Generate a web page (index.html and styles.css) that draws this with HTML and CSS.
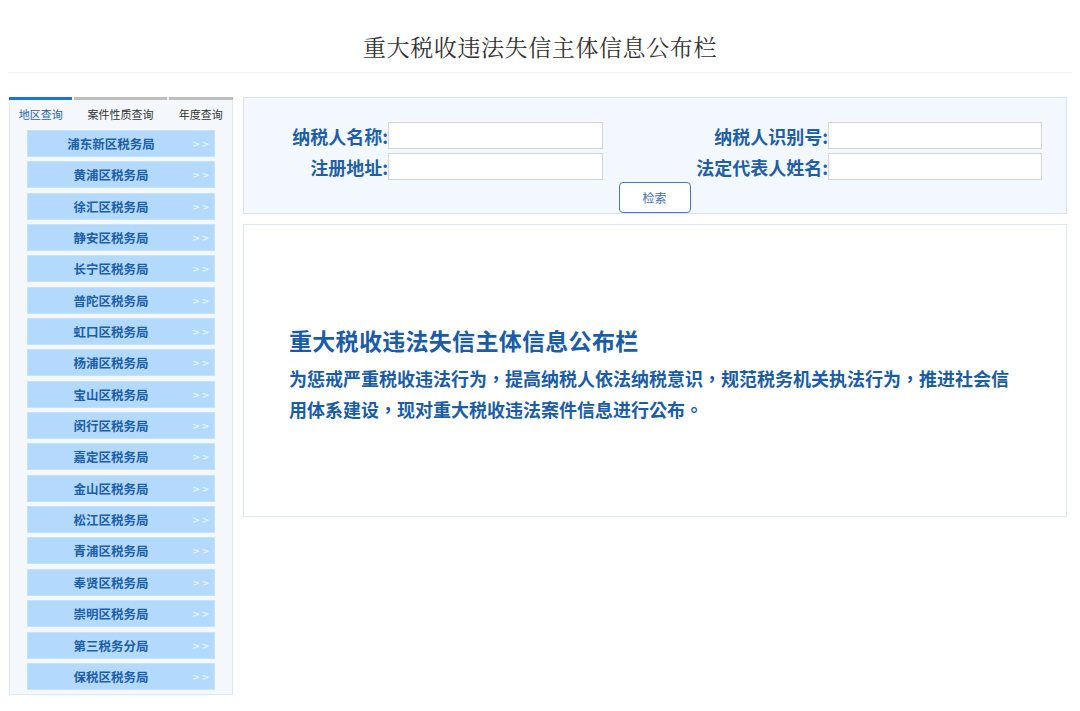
FILE: index.html
```html
<!DOCTYPE html>
<html lang="zh-CN">
<head>
<meta charset="utf-8">
<title>重大税收违法失信主体信息公布栏</title>
<link rel="stylesheet" href="styles.css">
</head>
<body>
<header class="header">
  <h1 class="page-title">重大税收违法失信主体信息公布栏</h1>
</header>
<div class="main">
  <aside class="sidebar">
    <div class="tabs">
      <div class="tab tab-active">地区查询</div>
      <div class="tab tab-mid">案件性质查询</div>
      <div class="tab tab-last">年度查询</div>
    </div>
    <ul class="list">
      <li class="item"><span class="name">浦东新区税务局</span><span class="arrow">&gt;&gt;</span></li>
      <li class="item"><span class="name">黄浦区税务局</span><span class="arrow">&gt;&gt;</span></li>
      <li class="item"><span class="name">徐汇区税务局</span><span class="arrow">&gt;&gt;</span></li>
      <li class="item"><span class="name">静安区税务局</span><span class="arrow">&gt;&gt;</span></li>
      <li class="item"><span class="name">长宁区税务局</span><span class="arrow">&gt;&gt;</span></li>
      <li class="item"><span class="name">普陀区税务局</span><span class="arrow">&gt;&gt;</span></li>
      <li class="item"><span class="name">虹口区税务局</span><span class="arrow">&gt;&gt;</span></li>
      <li class="item"><span class="name">杨浦区税务局</span><span class="arrow">&gt;&gt;</span></li>
      <li class="item"><span class="name">宝山区税务局</span><span class="arrow">&gt;&gt;</span></li>
      <li class="item"><span class="name">闵行区税务局</span><span class="arrow">&gt;&gt;</span></li>
      <li class="item"><span class="name">嘉定区税务局</span><span class="arrow">&gt;&gt;</span></li>
      <li class="item"><span class="name">金山区税务局</span><span class="arrow">&gt;&gt;</span></li>
      <li class="item"><span class="name">松江区税务局</span><span class="arrow">&gt;&gt;</span></li>
      <li class="item"><span class="name">青浦区税务局</span><span class="arrow">&gt;&gt;</span></li>
      <li class="item"><span class="name">奉贤区税务局</span><span class="arrow">&gt;&gt;</span></li>
      <li class="item"><span class="name">崇明区税务局</span><span class="arrow">&gt;&gt;</span></li>
      <li class="item"><span class="name">第三税务分局</span><span class="arrow">&gt;&gt;</span></li>
      <li class="item"><span class="name">保税区税务局</span><span class="arrow">&gt;&gt;</span></li>
    </ul>
  </aside>
  <section class="content">
    <form class="search">
      <div class="grid">
        <label class="label">纳税人名称:</label>
        <input class="field" type="text">
        <label class="label">纳税人识别号:</label>
        <input class="field" type="text">
        <label class="label">注册地址:</label>
        <input class="field" type="text">
        <label class="label">法定代表人姓名:</label>
        <input class="field" type="text">
      </div>
      <div class="actions">
        <button class="btn" type="button">检索</button>
      </div>
    </form>
    <div class="intro">
      <h2 class="intro-title">重大税收违法失信主体信息公布栏</h2>
      <p class="intro-text" lang="zh-TW">为惩戒严重税收违法行为，提高纳税人依法纳税意识，规范税务机关执法行为，推进社会信用体系建设，现对重大税收违法案件信息进行公布。</p>
    </div>
  </section>
</div>
</body>
</html>
```
FILE: styles.css
```css
* { box-sizing: border-box; }
html, body {
  margin: 0;
  padding: 0;
  background: #ffffff;
  font-family: "Noto Sans CJK SC", "Noto Sans", sans-serif;
}
.header {
  margin: 0 8px;
  padding: 30px 0 8px;
  border-bottom: 1px solid #f0f0f0;
}
.page-title {
  margin: 0;
  text-align: center;
  font-family: "Noto Serif CJK SC", "Noto Sans CJK SC", serif;
  font-weight: normal;
  font-size: 23px;
  line-height: 34px;
  color: #333333;
  letter-spacing: 0.6px;
}
.main {
  display: flex;
  align-items: flex-start;
  gap: 10px;
  padding: 24px 0 0 9px;
}
.sidebar {
  width: 224px;
  flex: none;
  background: #f4f8fd;
  border: 1px solid #dde9f5;
  border-top: none;
  padding-bottom: 4px;
}
.tabs {
  display: flex;
  gap: 2px;
  margin: 0 -1px;
}
.tab {
  border-top: 3px solid #bdbdbd;
  height: 33px;
  padding-top: 7px;
  font-size: 11px;
  line-height: 14px;
  color: #333333;
  text-align: center;
}
.tab-active {
  width: 64px;
  border-top-color: #1877d0;
  color: #1e5fa8;
}
.tab-mid { width: 93px; }
.tab-last { width: 65px; }
.list {
  list-style: none;
  margin: 0;
  padding: 0 17px;
  display: flex;
  flex-direction: column;
  gap: 4.35px;
}
.item {
  display: flex;
  align-items: center;
  height: 27px;
  background: #b3dafc;
  border: 1px solid #c3e2fd;
}
.name {
  flex: 1;
  text-align: center;
  font-size: 12.5px;
  font-weight: bold;
  color: #1c5ea8;
  padding-left: 2px;
}
.arrow {
  width: 22px;
  font-family: "DejaVu Sans", sans-serif;
  font-size: 9.5px;
  font-weight: bold;
  letter-spacing: 1.5px;
  color: #e6f3ff;
}
.content {
  width: 824px;
  flex: none;
  display: flex;
  flex-direction: column;
  gap: 10px;
}
.search {
  margin: 0;
  height: 117px;
  background: #f3f8fe;
  border: 1px solid #d8e5f3;
  padding-top: 24px;
}
.grid {
  display: grid;
  grid-template-columns: 144px 215px 225px 214px;
  grid-auto-rows: 27px;
  row-gap: 4px;
  align-items: center;
}
.label {
  text-align: right;
  font-size: 18px;
  line-height: 22px;
  font-weight: bold;
  color: #1e5fa8;
  white-space: nowrap;
}
.field {
  height: 27px;
  margin: 0;
  border: 1px solid #d6d6d6;
  background: #ffffff;
  font-size: 13px;
  padding: 0 4px;
}
.actions {
  display: flex;
  justify-content: center;
  padding-top: 2px;
}
.btn {
  width: 72px;
  height: 31px;
  border: 1px solid #4c78c0;
  border-radius: 4px;
  background: #ffffff;
  color: #3f6fb5;
  font-family: "Noto Sans CJK SC", sans-serif;
  font-size: 12px;
  padding: 0;
  margin-left: -1px;
}
.intro {
  height: 293px;
  background: #ffffff;
  border: 1px solid #dce8f4;
  padding: 100px 45px 0;
}
.intro-title {
  margin: 0;
  font-size: 23px;
  line-height: 30px;
  font-weight: bold;
  color: #1a5ca8;
  letter-spacing: 0.3px;
}
.intro-text {
  margin: 8px 0 0;
  max-width: 730px;
  font-family: "Noto Sans CJK TC", "Noto Sans CJK SC", sans-serif;
  font-size: 18px;
  line-height: 31px;
  font-weight: bold;
  color: #1a5ca8;
}
```
